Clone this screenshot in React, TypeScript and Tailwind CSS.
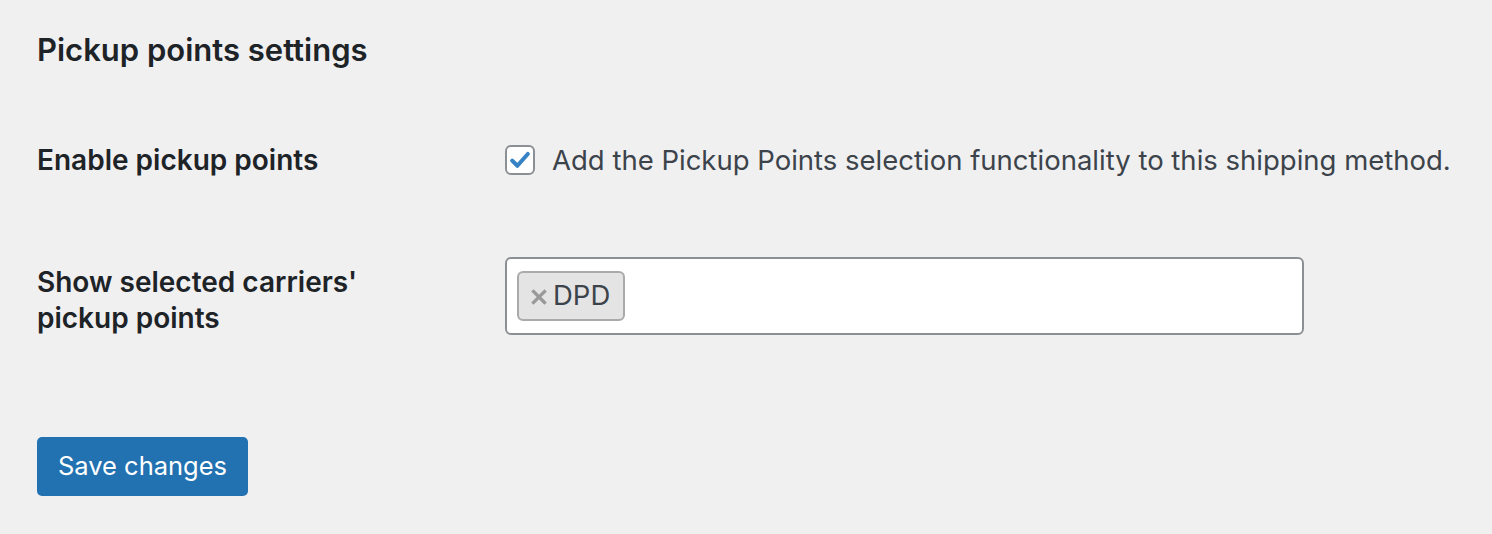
export default function App() {
  return (
    <div className="min-h-[534px] w-[1492px] bg-[#f0f0f1] pl-[37px] pt-[32px] text-[#1d2327]" style={{ fontFamily: "Inter, 'Noto Sans', sans-serif" }}>
      <h2 className="text-[31px] font-semibold leading-[36px]">Pickup points settings</h2>
      <div className="mt-[74px] flex h-[36px] items-center">
        <div className="w-[468px] text-[28px] font-semibold leading-[36px]">Enable pickup points</div>
        <label className="flex items-center gap-[17px]">
          <span className="flex h-[30px] w-[30px] items-center justify-center rounded-[6px] border-2 border-[#8c8f94] bg-white">
            <svg width="24" height="24" viewBox="0 0 20 20">
              <path d="M3.5 10.5 L7.8 14.8 L16.5 5" fill="none" stroke="#3582c4" strokeWidth="3.4" strokeLinecap="round" strokeLinejoin="round" />
            </svg>
          </span>
          <span className="text-[27.5px] leading-[36px] text-[#3c434a]">Add the Pickup Points selection functionality to this shipping method.</span>
        </label>
      </div>
      <div className="mt-[79px] flex items-start">
        <div className="mt-[7px] w-[468px] text-[28px] font-semibold leading-[36px]">
          Show selected carriers'<br />pickup points
        </div>
        <div className="flex h-[78px] w-[799px] items-center rounded-[6px] border-2 border-[#8c8f94] bg-white px-[10px]">
          <span className="flex h-[50px] items-center gap-[6px] rounded-[6px] border-2 border-[#aaa] bg-[#e4e4e4] pl-[12px] pr-[13px] text-[27.5px] text-[#3c434a]">
            <svg width="16" height="16" viewBox="0 0 16 16" className="mt-[2px]">
              <path d="M2.5 2.5 L13.5 13.5 M13.5 2.5 L2.5 13.5" stroke="#999" strokeWidth="3.2" strokeLinecap="square" />
            </svg>
            DPD
          </span>
        </div>
      </div>
      <button className="mt-[101px] h-[59px] w-[211px] rounded-[5px] bg-[#2271b1] text-[25.5px] text-white">Save changes</button>
    </div>
  );
}
